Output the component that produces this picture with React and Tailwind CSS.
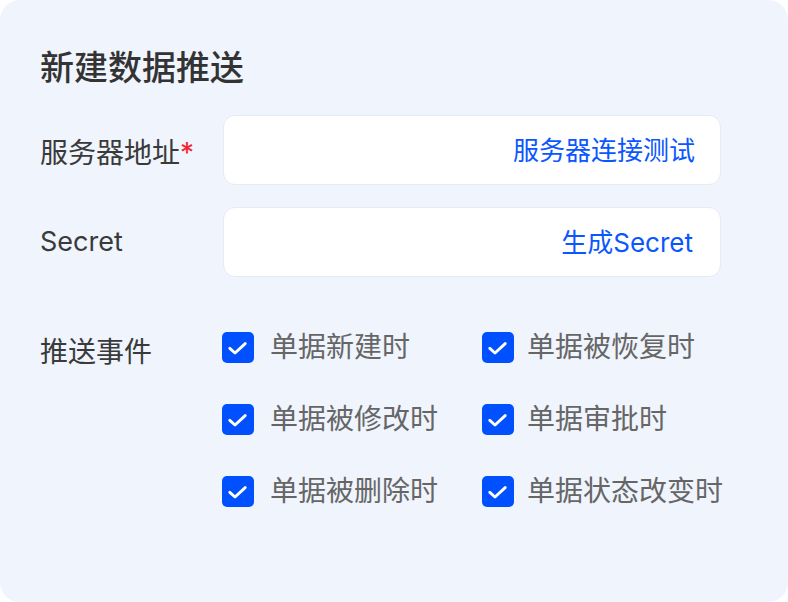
import React from "react";

const events = [
  "单据新建时",
  "单据被恢复时",
  "单据被修改时",
  "单据审批时",
  "单据被删除时",
  "单据状态改变时",
];

function Check() {
  return (
    <div className="w-[32px] h-[31px] rounded-[5px] bg-[#0050ff] shrink-0">
      <svg width="32" height="31" viewBox="0 0 32 31" fill="none">
        <path d="M7.8 16.3 L13 21 L23.2 11.6" stroke="white" strokeWidth="2.9" strokeLinecap="round" strokeLinejoin="round" />
      </svg>
    </div>
  );
}

export default function App() {
  return (
    <div className="w-[788px] h-[602px] bg-white">
      <div
        className="w-[788px] h-[602px] bg-[#eff4fd] rounded-[20px] pl-[40px] pr-[67px] pt-[48px]"
        style={{ fontFamily: "Inter, 'Noto Sans CJK SC', sans-serif" }}
      >
        <div className="text-[34px] leading-[40px] font-medium text-[#333333]">新建数据推送</div>

        <div className="flex items-center mt-[27px]">
          <div className="w-[183px] shrink-0 text-[28px] leading-[34px] text-[#3a3a3a] pt-[6px]">
            服务器地址<span className="text-[#f5222d]">*</span>
          </div>
          <div className="flex-1 h-[70px] bg-white rounded-[12px] border border-[#e6ebf2] flex items-center justify-end pr-[25px]">
            <span className="text-[26px] text-[#0a56ff]">服务器连接测试</span>
          </div>
        </div>

        <div className="flex items-center mt-[22px]">
          <div className="w-[183px] shrink-0 text-[27px] leading-[34px] text-[#3a3a3a]">Secret</div>
          <div className="flex-1 h-[70px] bg-white rounded-[12px] border border-[#e6ebf2] flex items-center justify-end pr-[27px]">
            <span className="text-[26px] text-[#0a56ff]">生成Secret</span>
          </div>
        </div>

        <div className="flex mt-[55px]">
          <div className="w-[182px] shrink-0 text-[28px] leading-[34px] text-[#3a3a3a] pt-[3px]">推送事件</div>
          <div className="grid grid-cols-[260px_1fr] gap-y-[41px]">
            {events.map((e, i) => (
              <div key={e} className={i % 2 === 0 ? "flex items-center gap-[16px] h-[31px]" : "flex items-center gap-[13px] h-[31px]"}>
                <Check />
                <span className="text-[28px] leading-[31px] text-[#666666] whitespace-nowrap">{e}</span>
              </div>
            ))}
          </div>
        </div>
      </div>
    </div>
  );
}
